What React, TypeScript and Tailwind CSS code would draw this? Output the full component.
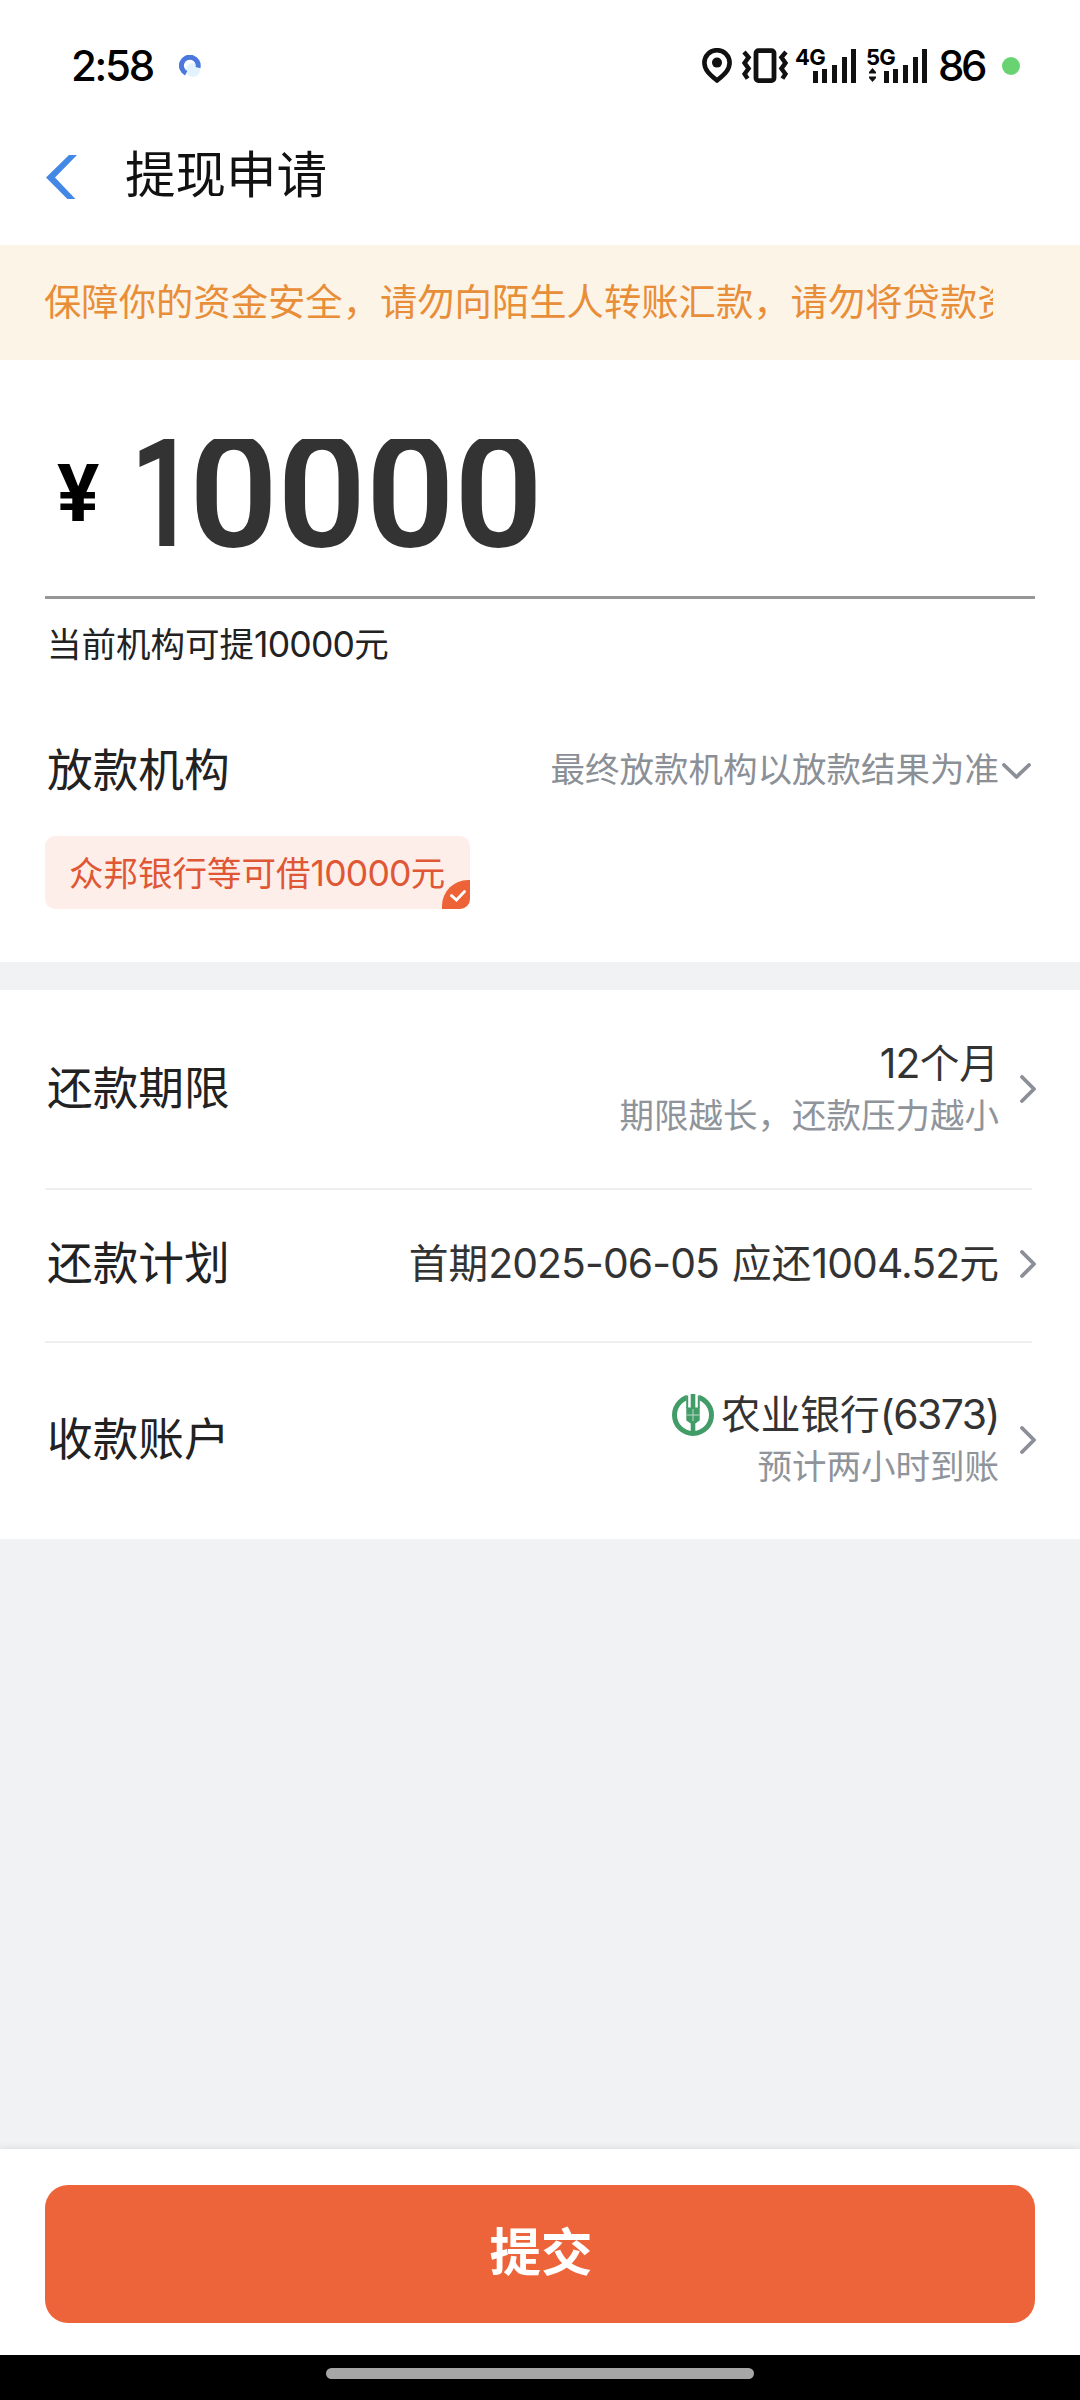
import type { ReactNode } from "react";
import clsx from "clsx";

const signalBars = [12, 14, 18, 26, 34];

const LocationIcon = () => (
  <svg width="30" height="36" viewBox="0 0 30 36" fill="none">
    <path d="M15 32.6C9 27.4 2.4 22.6 2.4 14.8a12.6 12.6 0 0 1 25.2 0C27.6 22.6 21 27.4 15 32.6Z" stroke="#111" strokeWidth="4.6" strokeLinejoin="round" />
    <circle cx="15" cy="14.6" r="5" fill="#111" />
  </svg>
);

const VibrateIcon = () => (
  <svg width="46" height="36" viewBox="0 0 46 36" fill="none" stroke="#111">
    <rect x="14" y="2.6" width="18" height="30" rx="2.5" strokeWidth="4.8" />
    <path d="M2 4l4.6 5.4L2.6 15l4 5.6-4 5.4 3 4.6" strokeWidth="4.4" />
    <path d="M44 4l-4.6 5.4 4 5.6-4 5.6 4 5.4-3 4.6" strokeWidth="4.4" />
  </svg>
);

const Signal = ({ label, arrows }: { label: string; arrows?: boolean }) => (
  <div className="relative flex h-9 w-[61px] items-end justify-end gap-[4.6px] pb-px">
    <span className="absolute -top-[2px] left-0 font-[Inter] text-[22px] leading-[22px] font-bold tracking-[-0.8px] text-black">
      {label}
    </span>
    {arrows && (
      <svg className="absolute bottom-[2px] left-[3px]" width="7" height="14" viewBox="0 0 7 14">
        <path d="M3.5 0L7 4v1.6H0V4ZM0 8.4h7V10l-3.5 4L0 10Z" fill="#111" />
      </svg>
    )}
    {signalBars.map((height) => (
      <i key={height} className="w-[5px] bg-[#111]" style={{ height }} />
    ))}
  </div>
);

const StatusBar = () => (
  <div className="flex h-[132px] items-center justify-between pr-[60px] pl-[71px]">
    <div className="flex items-center gap-[26px]">
      <span className="font-[Inter] text-[42px] leading-none font-medium tracking-[-2.3px] text-black">2:58</span>
      <svg width="22" height="22" viewBox="0 0 22 22" fill="none">
        <circle cx="14" cy="15" r="7" fill="#e3f3fd" />
        <path d="M7.2 18.2A8.4 8.4 0 1 1 19 12.6" stroke="#4a78dc" strokeWidth="5" />
      </svg>
    </div>
    <div className="flex items-center">
      <LocationIcon />
      <div className="ml-[10px]">
        <VibrateIcon />
      </div>
      <div className="ml-[7px]">
        <Signal label="4G" />
      </div>
      <div className="ml-[10px]">
        <Signal label="5G" arrows />
      </div>
      <span className="ml-[11px] font-[Inter] text-[42px] leading-none font-medium tracking-[-3.5px] text-black">86</span>
      <i className="ml-[18px] size-[18px] rounded-full bg-[#69d371]" />
    </div>
  </div>
);

const NavBar = () => (
  <div className="flex h-[113px] items-center pb-[27px] pl-[46px]">
    <svg className="mt-1" width="31" height="44" viewBox="0 0 31 44">
      <path d="M23 0h8L9 22.4 29.4 44H21.4L0 22.4Z" fill="#4488e6" />
    </svg>
    <h1 className="ml-[48px] text-[50.5px] leading-none text-[#111]">提现申请</h1>
  </div>
);

const Notice = () => (
  <div className="flex h-[115px] items-center bg-[#fdf4e8] pr-[87px] pl-[44px]">
    <p className="w-full overflow-hidden text-[37.35px] leading-[56px] whitespace-nowrap text-[#e88e38]">
      保障你的资金安全，请勿向陌生人转账汇款，请勿将贷款资
    </p>
  </div>
);

const Digits = ({ children, tight }: { children: ReactNode; tight?: boolean }) => (
  <span className={clsx("text-[1.03em] leading-none", tight ? "tracking-[-0.036em]" : "tracking-[-0.022em]")}>
    {children}
  </span>
);

const AmountSection = () => (
  <section className="h-[327px] px-[45px]">
    <div className="flex h-[239px] border-b-[3px] border-[#979797] pt-[79px] pl-[12px]">
      <span className="mt-[27px] w-[44px] font-[Roboto] text-[79px] leading-[56px] font-bold text-black">¥</span>
      <div className="ml-[29px] h-[116px] overflow-hidden">
        <span className="block font-[Roboto] text-[156px] leading-[107px] font-semibold tracking-[-0.8px] text-[#333]">
          <span className="inline-block w-[59px] origin-left scale-x-[0.74]">1</span>0000
        </span>
      </div>
    </div>
    <p className="mt-[22px] pl-[2px] text-[34.5px] leading-[48px] text-[#222]">
      当前机构可提<Digits>10000</Digits>元
    </p>
  </section>
);

const LenderSection = () => (
  <section className="h-[275px] pt-[53px] pl-[45px]">
    <div className="flex h-[60px] items-center justify-between pr-[49px] pl-[2px]">
      <h2 className="pt-[2px] text-[45.7px] leading-none text-[#222]">放款机构</h2>
      <div className="flex items-center gap-[3px]">
        <span className="text-[34.5px] leading-none text-[#8b8f96]">最终放款机构以放款结果为准</span>
        <svg className="mt-[2px]" width="29" height="17" viewBox="0 0 29 17" fill="none">
          <path d="M2 2l12.5 12L27 2" stroke="#8b8f96" strokeWidth="3.8" strokeLinecap="round" strokeLinejoin="round" />
        </svg>
      </div>
    </div>
    <div className="relative mt-[36px] flex h-[73px] w-[425px] items-center overflow-hidden rounded-[10px] bg-[#fdeee9] pt-[2px] pl-[24px]">
      <span className="text-[34.5px] leading-none whitespace-nowrap text-[#df5734]">
        众邦银行等可借<Digits>10000</Digits>元
      </span>
      <span className="absolute right-0 bottom-0 flex h-[29px] w-[28px] items-center justify-center rounded-tl-[26px] bg-[#ee6237] pt-[3px] pl-[3px]">
        <svg width="16" height="12" viewBox="0 0 16 12" fill="none">
          <path d="M1.5 5.6l5 4.4L14.5 1.5" stroke="#fff" strokeWidth="2.8" strokeLinecap="round" />
        </svg>
      </span>
    </div>
  </section>
);

const BankLogo = () => (
  <svg width="42" height="42" viewBox="0 0 42 42" fill="none">
    <circle cx="21" cy="21" r="18.5" stroke="#429c67" strokeWidth="5" />
    <path d="M14.5 0h13v14h-13Z" fill="#fff" />
    <path d="M18.7 0h4.6v13.5h4.4v13l-4.4 3V40h-4.6V29.5l-4.4-3v-13h4.4Z" fill="#429c67" />
    <path d="M15.2 1.5v12.5M26.8 1.5v12.5" stroke="#429c67" strokeWidth="2" />
    <path d="M21 15v12M14.5 21h13" stroke="#b9dbc7" strokeWidth="1" />
  </svg>
);

interface RowProps {
  label: string;
  hint?: string;
  icon?: ReactNode;
  children: ReactNode;
}

const Row = ({ label, hint, icon, children }: RowProps) => (
  <div className="flex h-full items-center pl-[2px]">
    <span className="text-[45.7px] leading-none text-[#222]">{label}</span>
    <div className="ml-auto flex flex-col items-end pt-px">
      <div className="flex h-[52px] items-center gap-[7px] text-[39.7px] leading-none text-[#333]">
        {icon}
        <span>{children}</span>
      </div>
      {hint && <span className="text-[34.5px] leading-[52px] text-[#8f949b]">{hint}</span>}
    </div>
    <svg className="-mr-[5px] ml-[20px]" width="18" height="28" viewBox="0 0 18 28" fill="none">
      <path d="M3 2l12 12L3 26" stroke="#8b8f96" strokeWidth="3.8" strokeLinecap="round" strokeLinejoin="round" />
    </svg>
  </div>
);

const DetailList = () => (
  <section className="bg-white pr-[48px] pl-[45px]">
    <div className="h-[200px] border-b-2 border-[#efeff1]">
      <Row label="还款期限" hint="期限越长，还款压力越小">
        <Digits>12</Digits>个月
      </Row>
    </div>
    <div className="h-[153px] border-b-2 border-[#efeff1] pb-[4px]">
      <Row label="还款计划">
        首期<Digits>2025-06-05</Digits>
        <span className="ml-[13px]">应还</span>
        <Digits>1004.52</Digits>元
      </Row>
    </div>
    <div className="h-[196px] pb-[2px]">
      <Row label="收款账户" hint="预计两小时到账" icon={<BankLogo />}>
        农业银行<Digits tight>(6373)</Digits>
      </Row>
    </div>
  </section>
);

const App = () => {
  return (
    <div className="flex h-[2400px] w-[1080px] flex-col overflow-hidden bg-[#f0f2f4] font-['Inter','Noto_Sans_CJK_SC',sans-serif]">
      <div className="bg-white">
        <StatusBar />
        <NavBar />
        <Notice />
        <AmountSection />
        <LenderSection />
      </div>

      <div className="h-[28px]" />
      <DetailList />

      {/* Submit bar */}
      <footer className="mt-auto">
        <div className="h-[206px] bg-white px-[45px] pt-[36px] shadow-[0_-2px_6px_rgba(0,0,0,0.07)]">
          <button className="h-[138px] w-full rounded-[23px] bg-[#ee643a] pb-[2px] pl-[2px] text-[51.5px] leading-none font-bold text-white">
            提交
          </button>
        </div>
        <div className="flex h-[45px] justify-center bg-black pt-[13px]">
          <i className="h-[11px] w-[428px] rounded-full bg-[#a6a6a6]" />
        </div>
      </footer>
    </div>
  );
};

export default App;
